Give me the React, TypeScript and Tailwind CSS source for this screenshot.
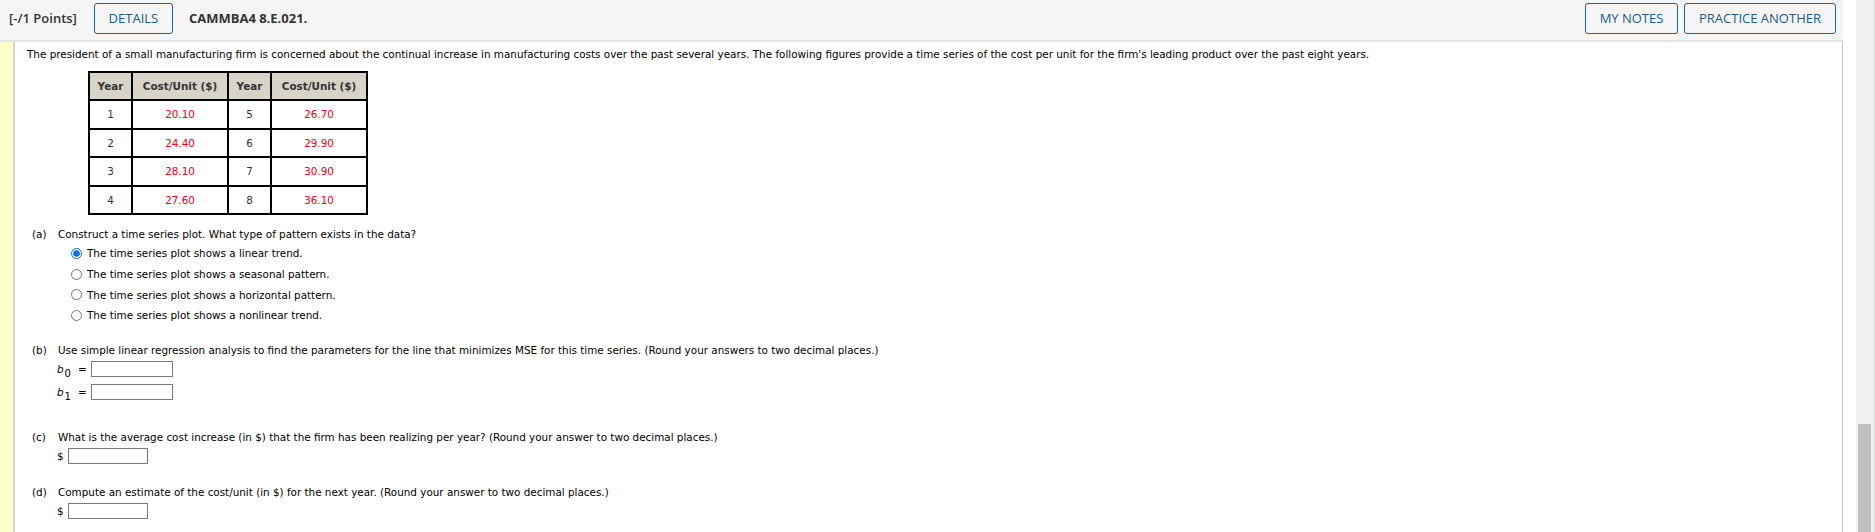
import { useState } from "react";

const rows = [
    ["1", "20.10", "5", "26.70"],
    ["2", "24.40", "6", "29.90"],
    ["3", "28.10", "7", "30.90"],
    ["4", "27.60", "8", "36.10"],
];

const options = [
    "The time series plot shows a linear trend.",
    "The time series plot shows a seasonal pattern.",
    "The time series plot shows a horizontal pattern.",
    "The time series plot shows a nonlinear trend.",
];

const headBtn =
    "h-[31px] whitespace-nowrap border border-[#1f6096] rounded-[3px] text-[13px] font-medium text-[#1d5a8a] bg-transparent";

function AnswerBox({ w = "w-[82px]" }: { w?: string }) {
    return <input type="text" className={`${w} h-[16px] border border-[#7a7a7a] bg-white outline-none`} />;
}

export default function App() {
    const [choice, setChoice] = useState(0);

    return (
        <div className="flex w-[1875px] h-[532px] overflow-hidden bg-white text-black">
            <div className="w-[1843px] flex flex-col">
                <div className="h-[42px] shrink-0 flex items-start pt-[3px] pl-[9px] pr-[7px] bg-[#f5f5f5] border-b-2 border-[#e3e3e3] font-['Open_Sans',sans-serif] text-[13px]">
                    <span className="h-[31px] flex items-center font-semibold text-[#333] whitespace-nowrap">[-/1 Points]</span>
                    <button className={`${headBtn} ml-[17px] w-[79px]`}>DETAILS</button>
                    <span className="h-[31px] ml-[16px] flex items-center font-bold text-[#333] whitespace-nowrap">CAMMBA4 8.E.021.</span>
                    <div className="ml-auto flex gap-[6px]">
                        <button className={`${headBtn} w-[93px]`}>MY NOTES</button>
                        <button className={`${headBtn} w-[152px]`}>PRACTICE ANOTHER</button>
                    </div>
                </div>

                <div className="flex flex-1">
                    <div className="w-[15px] bg-[#ffffcc] border-r-2 border-[#d4d4d4]" />
                    <div className="flex-1 border-r border-[#c8c8c8] pl-[12px] pt-[5px] font-['DejaVu_Sans',Verdana,sans-serif] text-[10.4px] leading-[14px]">
                        <p className="whitespace-nowrap">
                            The president of a small manufacturing firm is concerned about the continual increase in manufacturing costs over the past several years. The following figures provide a time series of the cost per unit for the firm's leading product over the past eight years.
                        </p>

                        <table className="ml-[61px] mt-[10px] border-collapse border-2 border-black text-center">
                            <thead>
                                <tr className="h-[28px] bg-[#d7d3c8] text-[#333]">
                                    {["Year", "Cost/Unit ($)", "Year", "Cost/Unit ($)"].map((h, i) => (
                                        <th key={i} className={`border-2 border-black font-bold ${i % 2 ? "w-[96px]" : "w-[43px]"}`}>{h}</th>
                                    ))}
                                </tr>
                            </thead>
                            <tbody>
                                {rows.map((r) => (
                                    <tr key={r[0]} className="h-[28.5px]">
                                        <td className="border-2 border-black text-[#333]">{r[0]}</td>
                                        <td className="border-2 border-black text-[#ee0010]">{r[1]}</td>
                                        <td className="border-2 border-black text-[#333]">{r[2]}</td>
                                        <td className="border-2 border-black text-[#ee0010]">{r[3]}</td>
                                    </tr>
                                ))}
                            </tbody>
                        </table>

                        <div className="mt-[12px] flex">
                            <span className="ml-[5px] w-[26px]">(a)</span>
                            <span>Construct a time series plot. What type of pattern exists in the data?</span>
                        </div>
                        <div className="mt-[2px] ml-[44px] flex flex-col">
                            {options.map((o, i) => (
                                <label key={i} className="h-[20.7px] flex items-center gap-[5px]">
                                    <input
                                        type="radio"
                                        name="pattern"
                                        checked={choice === i}
                                        onChange={() => setChoice(i)}
                                        className="w-[11px] h-[11px] m-0 accent-[#0a6ee6]"
                                    />
                                    <span>{o}</span>
                                </label>
                            ))}
                        </div>

                        <div className="mt-[17px] flex">
                            <span className="ml-[5px] w-[26px]">(b)</span>
                            <span>Use simple linear regression analysis to find the parameters for the line that minimizes MSE for this time series. (Round your answers to two decimal places.)</span>
                        </div>
                        {["0", "1"].map((s, i) => (
                            <div key={s} className={`flex items-center ${i === 0 ? "mt-[4px]" : "mt-[7px]"}`}>
                                <span className="ml-[30px] w-[21px] italic">
                                    b<sub className="not-italic text-[10px] relative top-[4px] ml-[1px]">{s}</sub>
                                </span>
                                <span className="w-[13px]">=</span>
                                <AnswerBox />
                            </div>
                        ))}

                        <div className="mt-[30px] flex">
                            <span className="ml-[5px] w-[26px]">(c)</span>
                            <span>What is the average cost increase (in $) that the firm has been realizing per year? (Round your answer to two decimal places.)</span>
                        </div>
                        <div className="mt-[4px] flex items-center">
                            <span className="ml-[30px] w-[11px]">$</span>
                            <AnswerBox w="w-[80px]" />
                        </div>

                        <div className="mt-[21px] flex">
                            <span className="ml-[5px] w-[26px]">(d)</span>
                            <span>Compute an estimate of the cost/unit (in $) for the next year. (Round your answer to two decimal places.)</span>
                        </div>
                        <div className="mt-[4px] flex items-center">
                            <span className="ml-[30px] w-[11px]">$</span>
                            <AnswerBox w="w-[80px]" />
                        </div>
                    </div>
                </div>
            </div>

            <div className="w-[13px]" />
            <div className="w-[19px] bg-[#f1f1f1] border-r-2 border-[#e4e4e4] flex flex-col">
                <div className="h-[424px]" />
                <div className="ml-[2px] w-[13px] flex-1 bg-[#c1c1c1]" />
            </div>
        </div>
    );
}
